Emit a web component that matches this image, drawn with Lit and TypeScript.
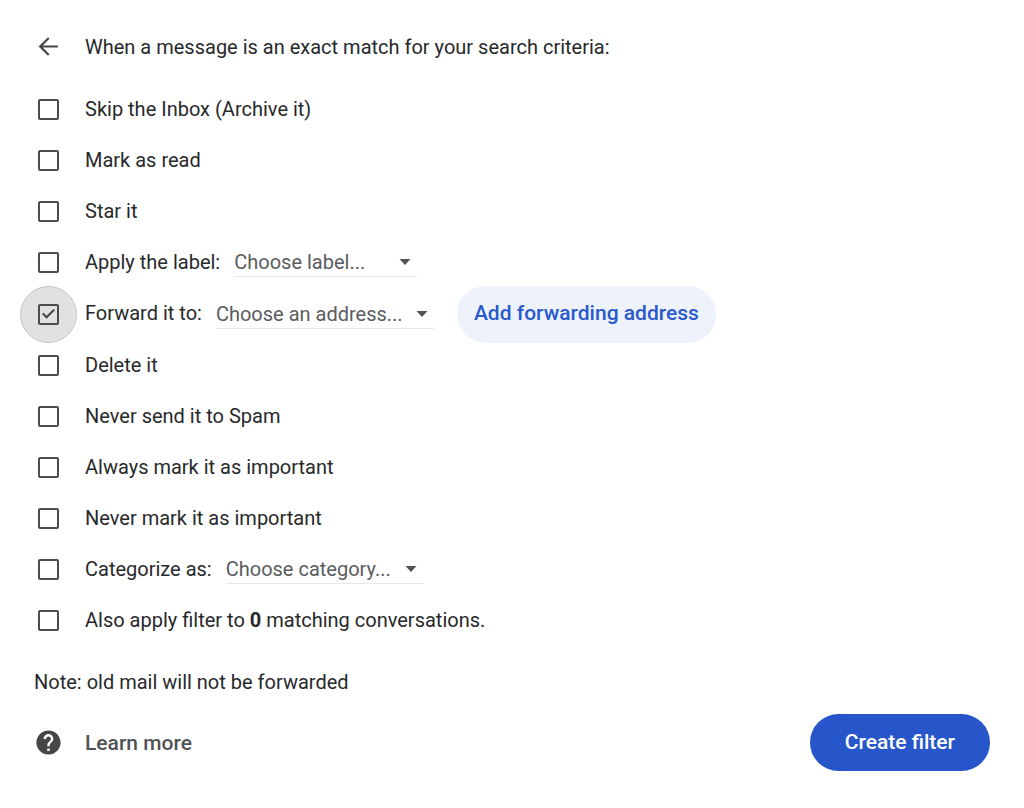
import { LitElement, html, css, nothing } from "lit";
import { customElement, property, state } from "lit/decorators.js";

interface FilterAction {
  id: string;
  label: string;
  placeholder?: string;
  size?: string;
  forward?: boolean;
  matches?: number;
}

const ACTIONS: FilterAction[] = [
  { id: "archive", label: "Skip the Inbox (Archive it)" },
  { id: "read", label: "Mark as read" },
  { id: "star", label: "Star it" },
  { id: "label", label: "Apply the label:", placeholder: "Choose label...", size: "label" },
  { id: "forward", label: "Forward it to:", placeholder: "Choose an address...", size: "address", forward: true },
  { id: "delete", label: "Delete it" },
  { id: "no-spam", label: "Never send it to Spam" },
  { id: "important", label: "Always mark it as important" },
  { id: "not-important", label: "Never mark it as important" },
  { id: "category", label: "Categorize as:", placeholder: "Choose category...", size: "category" },
  { id: "apply", label: "Also apply filter to", matches: 0 },
];

@customElement("filter-select")
class FilterSelect extends LitElement {
  @property() label = "";
  @property() placeholder = "";
  @property() size = "";

  static styles = css`
    :host { display: block; }
    .field {
      display: grid;
      align-items: center;
      border-bottom: 1px solid #e6e8ec;
    }
    .label { width: 183px; }
    .address { width: 218px; }
    .category { width: 197px; }
    select {
      grid-area: 1 / 1;
      width: 100%;
      height: 28px;
      margin: 0;
      padding: 0;
      border: 0;
      background: transparent;
      appearance: none;
      color: #5a5c5e;
      font: inherit;
      outline-offset: 2px;
    }
    svg {
      grid-area: 1 / 1;
      justify-self: end;
      width: 12px;
      height: 6px;
      margin-right: 6px;
      fill: #505254;
      pointer-events: none;
    }
  `;

  render() {
    return html`
      <div class="field ${this.size}">
        <select aria-label=${this.label}>
          <option>${this.placeholder}</option>
        </select>
        <svg viewBox="0 0 12 6" aria-hidden="true"><path d="M0.5 0h11L6 6z" /></svg>
      </div>
    `;
  }
}

@customElement("app-root")
class AppRoot extends LitElement {
  @state() private checked = new Set<string>(["forward"]);

  static styles = css`
    :host {
      display: block;
      box-sizing: border-box;
      min-height: 100vh;
      padding: 28px 34px 37px 20px;
      background: #fff;
      color: #28292b;
      font-family: Roboto, "Liberation Sans", sans-serif;
      font-size: 20px;
      line-height: 24px;
    }
    .header, .row, .help {
      display: grid;
      grid-template-columns: 57px 1fr;
      column-gap: 8px;
      align-items: center;
    }
    .header { min-height: 37px; margin-bottom: 19px; }
    h1 { margin: 0; font: inherit; }
    .back {
      justify-self: center;
      display: grid;
      padding: 0;
      border: 0;
      background: transparent;
      color: #444746;
      cursor: pointer;
    }
    .icon { width: 29px; height: 29px; fill: currentColor; }
    .arrow { fill: none; stroke: currentColor; stroke-width: 1.8; }
    .list { margin: 0; padding: 0; list-style: none; }
    .row { height: 51px; }
    .row.tall { height: 52px; }
    .halo {
      box-sizing: border-box;
      display: grid;
      place-items: center;
      height: 57px;
      margin: -3px 0;
      border: 1px solid transparent;
      border-radius: 50%;
    }
    .halo.on { background: #e1e1e1; border-color: #c4c5ca; }
    input {
      box-sizing: border-box;
      display: grid;
      place-items: center;
      width: 21px;
      height: 21px;
      margin: 0;
      border: 2px solid #4a4c4e;
      border-radius: 2px;
      appearance: none;
      cursor: pointer;
    }
    input:checked::before {
      content: "";
      width: 13px;
      height: 11px;
      background: #444746;
      clip-path: polygon(0 50%, 11% 38%, 35% 66%, 88% 5%, 100% 17%, 35% 94%);
    }
    .content { display: flex; align-items: center; gap: 14px; }
    .content label { padding-bottom: 2px; }
    .add, .create {
      height: 57px;
      border: 0;
      border-radius: 29px;
      font: inherit;
      font-size: 21px;
      font-weight: 500;
      white-space: nowrap;
      cursor: pointer;
    }
    .add {
      margin: -3px 0 -3px 9px;
      padding: 0 17px 2px;
      background: #edf2fb;
      color: #2958cd;
    }
    .note { margin: 24px 0 20px 14px; }
    .footer { display: flex; align-items: center; justify-content: space-between; }
    .help { color: #505254; font-size: 21px; font-weight: 500; text-decoration: none; }
    .help .icon { justify-self: center; color: #444746; }
    .create {
      padding: 0 35px 2px;
      background: #2656c9;
      color: #fff;
    }
  `;

  private toggle(id: string) {
    const next = new Set(this.checked);
    next.has(id) ? next.delete(id) : next.add(id);
    this.checked = next;
  }

  private renderRow(action: FilterAction) {
    const on = this.checked.has(action.id);
    return html`
      <li class="row ${action.forward ? "tall" : ""}">
        <span class="halo ${on ? "on" : ""}">
          <input type="checkbox" id=${action.id} .checked=${on} @change=${() => this.toggle(action.id)} />
        </span>
        <div class="content">
          <label for=${action.id}>${action.label}${action.matches !== undefined
            ? html` <b>${action.matches}</b> matching conversations.`
            : nothing}</label>
          ${action.placeholder
            ? html`<filter-select
                .label=${action.label}
                .placeholder=${action.placeholder}
                .size=${action.size ?? ""}
              ></filter-select>`
            : nothing}
          ${action.forward ? html`<button class="add" type="button">Add forwarding address</button>` : nothing}
        </div>
      </li>
    `;
  }

  render() {
    return html`
      <header class="header">
        <button class="back" type="button" aria-label="Back">
          <svg class="icon arrow" viewBox="0 0 24 24" aria-hidden="true">
            <path d="M19.8 12H5.2M12.2 4.9L5.1 12l7.1 7.1" />
          </svg>
        </button>
        <h1>When a message is an exact match for your search criteria:</h1>
      </header>
      <ul class="list">${ACTIONS.map((action) => this.renderRow(action))}</ul>
      <p class="note">Note: old mail will not be forwarded</p>
      <footer class="footer">
        <a class="help" href="#learn-more">
          <svg class="icon" viewBox="0 0 24 24" aria-hidden="true">
            <path d="M12 2C6.48 2 2 6.48 2 12s4.48 10 10 10 10-4.48 10-10S17.52 2 12 2zm1 17h-2v-2h2v2zm2.07-7.75l-.9.92C13.45 12.9 13 13.5 13 15h-2v-.5c0-1.1.45-2.1 1.17-2.83l1.24-1.26c.37-.36.59-.86.59-1.41 0-1.1-.9-2-2-2s-2 .9-2 2H8c0-2.21 1.79-4 4-4s4 1.790 4 4c0 .88-.36 1.68-.93 2.25z" />
          </svg>
          <span>Learn more</span>
        </a>
        <button class="create" type="button">Create filter</button>
      </footer>
    `;
  }
}
